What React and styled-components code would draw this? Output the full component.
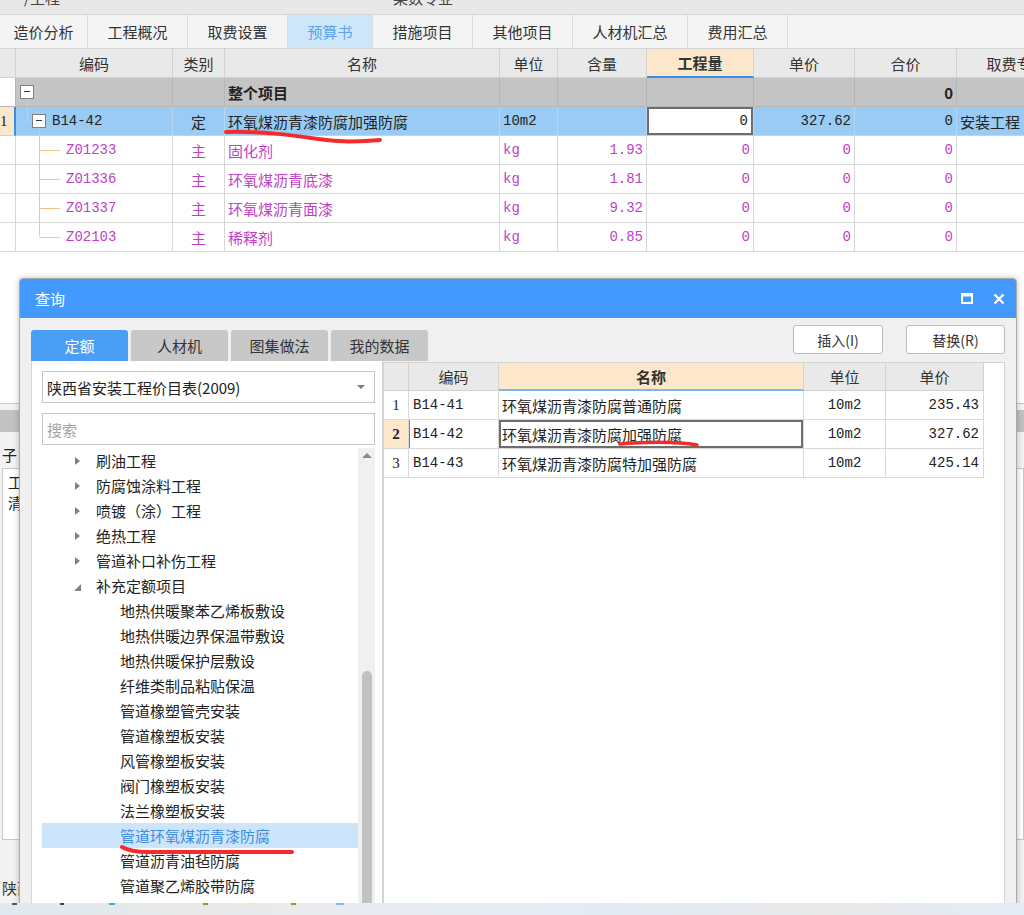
import React from 'react';
import styled, { createGlobalStyle } from 'styled-components';

const CJK = `"Noto Sans CJK SC", "Noto Sans", sans-serif`;
const MONO = `"Liberation Mono", "DejaVu Sans Mono", monospace`;
const SERIF = `"Liberation Serif", serif`;

const GlobalStyle = createGlobalStyle`
  html, body { margin: 0; padding: 0; }
  body { font-family: ${CJK}; background: #fff; overflow: hidden; }
  * { box-sizing: border-box; }
`;

const Page = styled.div`
  position: relative;
  width: 1024px;
  height: 915px;
  overflow: hidden;
  display: flex;
  flex-direction: column;
  background: #fff;
`;

/* ---------- top of the main window ---------- */
const TitleStrip = styled.div`
  height: 15px;
  flex: none;
  display: grid;
  grid-template-columns: 393px 1fr;
  background: #e8e8e8;
  border-bottom: 1px solid #d6d6d6;
  overflow: hidden;
`;
const TitleText = styled.div`
  margin-top: -12px;
  padding-left: ${p => p.$pad || 0}px;
  font-size: 15px;
  line-height: 20px;
  color: #444;
`;

const TabBar = styled.div`
  height: 34px;
  flex: none;
  display: flex;
  background: #f4f4f4;
  border-bottom: 1px solid #d4d4d4;
`;
const Tab = styled.div`
  width: ${p => p.$w}px;
  display: flex;
  align-items: center;
  justify-content: center;
  border-right: 1px solid #dadada;
  font-size: 15px;
  color: ${p => (p.$active ? '#5aa3ec' : '#333')};
  background: ${p => (p.$active ? '#cde6f8' : '#f4f4f4')};
`;

/* ---------- grid rows shared by both tables ---------- */
const Row = styled.div`
  display: grid;
  grid-template-columns: ${p => p.$cols};
  height: ${p => p.$h}px;
  flex: none;
  background: ${p => p.$bg};
  color: ${p => p.$color || '#222'};
  --line: ${p => p.$line};
`;

const Cell = styled.div`
  position: relative;
  display: flex;
  align-items: center;
  justify-content: ${p => (p.$align === 'right' ? 'flex-end' : p.$align === 'center' ? 'center' : 'flex-start')};
  padding: 0 ${p => p.$pr ?? 3}px 0 ${p => p.$pl ?? 3}px;
  border-right: 1px solid var(--line);
  border-bottom: 1px solid var(--line);
  font-family: ${p => (p.$mono ? MONO : p.$serif ? SERIF : CJK)};
  font-size: ${p => (p.$mono ? 14 : 15)}px;
  font-weight: ${p => (p.$bold ? 700 : 400)};
  white-space: nowrap;
  overflow: hidden;
  ${p => p.$bg && `background: ${p.$bg};`}
`;

const HeadCell = styled(Cell)`
  justify-content: center;
  color: #333;
  background: ${p => (p.$hl ? '#fde7cb' : '#e9e9e9')};
  ${p => p.$hl && `border-bottom: 2px solid ${p.$under || '#3b8fe2'};`}
`;

const EditCell = styled(Cell)`
  background: #fff;
  box-shadow: inset 0 0 0 2px #6c6c6c;
`;

const NumCell = styled(Cell)`
  font-family: ${SERIF};
  background: ${p => (p.$active ? '#fde7cb' : '#fff')};
  ${p => p.$active && p.$edge && 'border-right: 2px solid #3b8fe2;'}
`;

/* tree bits in the code column */
const MinusBox = styled.span`
  position: absolute;
  left: ${p => p.$x}px;
  top: 7px;
  width: 14px;
  height: 14px;
  border: 1px solid #808080;
  background: #fff;
  &::after {
    content: '';
    position: absolute;
    left: 3px;
    right: 3px;
    top: 5px;
    height: 1px;
    background: #333;
  }
`;
const VLine = styled.span`
  position: absolute;
  left: ${p => p.$x}px;
  top: ${p => p.$top}px;
  bottom: ${p => p.$bottom}px;
  border-left: 1px solid #f2c68d;
`;
const HLine = styled.span`
  position: absolute;
  left: ${p => p.$x}px;
  top: 14px;
  width: ${p => p.$w}px;
  border-top: 1px solid #f2c68d;
`;

const MAIN_COLS = '16px 157px 52px 275px 58px 89px 107px 101px 102px 120px';

const children = [
  { code: 'Z01233', name: '固化剂', qty: '1.93' },
  { code: 'Z01336', name: '环氧煤沥青底漆', qty: '1.81' },
  { code: 'Z01337', name: '环氧煤沥青面漆', qty: '9.32' },
  { code: 'Z02103', name: '稀释剂', qty: '0.85' },
];

const MainGrid = () => (
  <>
    <Row $cols={MAIN_COLS} $h={29} $bg="#e9e9e9" $line="#d2d2d2">
      <HeadCell />
      <HeadCell>编码</HeadCell>
      <HeadCell>类别</HeadCell>
      <HeadCell>名称</HeadCell>
      <HeadCell>单位</HeadCell>
      <HeadCell>含量</HeadCell>
      <HeadCell $hl $bold>工程量</HeadCell>
      <HeadCell>单价</HeadCell>
      <HeadCell>合价</HeadCell>
      <HeadCell>取费专业</HeadCell>
    </Row>

    <Row $cols={MAIN_COLS} $h={29} $bg="#c4c4c4" $line="#b6b6b6">
      <NumCell />
      <Cell>
        <MinusBox $x={4} />
        <VLine $x={11} $top={21} $bottom={0} />
      </Cell>
      <Cell />
      <Cell $bold>整个项目</Cell>
      <Cell />
      <Cell />
      <Cell />
      <Cell />
      <Cell $align="right" $bold>0</Cell>
      <Cell />
    </Row>

    <Row $cols={MAIN_COLS} $h={29} $bg="#99cbf5" $line="#b6d6f1">
      <NumCell $active $edge $pl={0}>1</NumCell>
      <Cell $mono $pl={36}>
        <VLine $x={11} $top={0} $bottom={15} />
        <HLine $x={11} $w={5} />
        <MinusBox $x={16} />
        <VLine $x={23} $top={21} $bottom={0} />
        B14-42
      </Cell>
      <Cell $align="center">定</Cell>
      <Cell>环氧煤沥青漆防腐加强防腐</Cell>
      <Cell $mono>10m2</Cell>
      <Cell />
      <EditCell $mono $align="right" $pr={5}>0</EditCell>
      <Cell $mono $align="right">327.62</Cell>
      <Cell $mono $align="right">0</Cell>
      <Cell>安装工程</Cell>
    </Row>

    {children.map((c, i) => (
      <Row key={c.code} $cols={MAIN_COLS} $h={29} $bg="#fff" $color="#bf3fc6" $line="#d6d6d6">
        <NumCell />
        <Cell $mono $pl={50}>
          <VLine $x={23} $top={0} $bottom={i === children.length - 1 ? 15 : 0} />
          <HLine $x={23} $w={21} />
          {c.code}
        </Cell>
        <Cell $align="center">主</Cell>
        <Cell>{c.name}</Cell>
        <Cell $mono>kg</Cell>
        <Cell $mono $align="right">{c.qty}</Cell>
        <Cell $mono $align="right">0</Cell>
        <Cell $mono $align="right">0</Cell>
        <Cell $mono $align="right">0</Cell>
        <Cell />
      </Row>
    ))}
  </>
);

/* ---------- lower pane of the main window (mostly behind the dialog) ---------- */
const BlankArea = styled.div`
  flex: 0 0 151px;
  background: #fff;
`;
const LowerPane = styled.div`
  flex: 1;
  display: flex;
  flex-direction: column;
  padding-top: 6px;
  background: #f3f3f3;
  border-top: 1px solid #c9c9c9;
`;
const PaneBar = styled.div`
  height: 22px;
  background: #c2c2c2;
`;
const PaneLabel = styled.div`
  margin-top: 14px;
  padding-left: 2px;
  font-size: 15px;
  line-height: 18px;
  color: #222;
`;
const PaneBox = styled.div`
  margin: 4px 0 0 2px;
  height: 372px;
  padding: 2px 5px;
  background: #fff;
  border: 1px solid #c8c8c8;
  font-size: 15px;
  line-height: 21px;
  color: #222;
`;
const PaneFooter = styled.div`
  margin-top: 38px;
  padding-left: 2px;
  font-size: 15px;
  line-height: 20px;
  color: #333;
`;

/* ---------- query dialog ---------- */
const Dialog = styled.div`
  position: absolute;
  left: 19px;
  top: 278px;
  width: 998px;
  height: 650px;
  display: flex;
  flex-direction: column;
  background: #f0f0f0;
  border: 1px solid #a9a9a9;
  border-radius: 4px 4px 0 0;
  box-shadow: 0 0 6px rgba(0, 0, 0, 0.25);
  overflow: hidden;
`;
const DialogTitle = styled.div`
  height: 39px;
  flex: none;
  display: flex;
  align-items: center;
  padding: 0 11px 0 15px;
  background: #4499ff;
  color: #fff;
  font-size: 15px;
`;
const TitleButtons = styled.div`
  margin-left: auto;
  display: flex;
  align-items: center;
  gap: 20px;
`;
const DialogBody = styled.div`
  flex: 1;
  display: flex;
  flex-direction: column;
  padding: 6px 11px 0 11px;
`;
const TopRow = styled.div`
  height: 37px;
  flex: none;
  display: flex;
  justify-content: space-between;
`;
const DTabs = styled.div`
  align-self: flex-end;
  display: flex;
  gap: 3px;
`;
const DTab = styled.div`
  width: 97px;
  height: 31px;
  display: flex;
  align-items: center;
  justify-content: center;
  border-radius: 3px 3px 0 0;
  font-size: 15px;
  color: ${p => (p.$active ? '#fff' : '#333')};
  background: ${p => (p.$active ? '#4a9ef6' : '#c8c8c8')};
`;
const Buttons = styled.div`
  align-self: flex-start;
  display: flex;
  gap: 23px;
  padding-top: 1px;
`;
const Button = styled.div`
  width: ${p => p.$w}px;
  height: 29px;
  display: flex;
  align-items: center;
  justify-content: center;
  background: #fff;
  border: 1px solid #bdbdbd;
  border-radius: 3px;
  font-size: 14px;
  color: #333;
`;

const Content = styled.div`
  flex: 1;
  display: flex;
`;
const LeftPanel = styled.div`
  width: 352px;
  flex: none;
  display: flex;
  flex-direction: column;
  padding: 10px 7px 0 10px;
  background: #fff;
  border: 1px solid #d6d6d6;
  border-top: none;
`;
const Select = styled.div`
  height: 32px;
  display: flex;
  align-items: center;
  padding: 0 9px 0 4px;
  border: 1px solid #c6c6c6;
  font-size: 15px;
  color: #222;
`;
const Caret = styled.span`
  margin-left: auto;
  border-left: 4px solid transparent;
  border-right: 4px solid transparent;
  border-top: 4px solid #7a7a7a;
`;
const Search = styled.input`
  margin-top: 10px;
  height: 32px;
  padding: 0 4px;
  border: 1px solid #c6c6c6;
  outline: none;
  font-family: ${CJK};
  font-size: 15px;
  &::placeholder { color: #a3a3a3; }
`;
const TreeWrap = styled.div`
  margin-top: 3px;
  flex: 1;
  display: flex;
`;
const TreeList = styled.div`
  flex: 1;
`;
const TreeRow = styled.div`
  height: 25px;
  display: flex;
  align-items: center;
  padding-left: ${p => (p.$level === 2 ? 78 : 32)}px;
  font-size: 15px;
  color: ${p => (p.$selected ? '#3d8de0' : '#222')};
  background: ${p => (p.$selected ? '#cce5fb' : 'transparent')};
`;
const Arrow = styled.span`
  width: 22px;
  flex: none;
  display: flex;
  &::before {
    content: '';
    ${p =>
      p.$open
        ? 'margin-top: 3px; border-bottom: 7px solid #808080; border-left: 7px solid transparent;'
        : 'margin-left: 1px; border-left: 5px solid #808080; border-top: 4px solid transparent; border-bottom: 4px solid transparent;'}
  }
`;
const Scrollbar = styled.div`
  width: 17px;
  flex: none;
  display: flex;
  flex-direction: column;
  align-items: center;
  background: #f0f0f0;
`;
const ScrollUp = styled.span`
  margin-top: 5px;
  border-left: 5px solid transparent;
  border-right: 5px solid transparent;
  border-bottom: 5px solid #8a8a8a;
`;
const ScrollThumb = styled.span`
  margin-top: 213px;
  width: 10px;
  height: 240px;
  border-radius: 5px;
  background: #c2c2c2;
`;

const RightPanel = styled.div`
  flex: 1;
  display: flex;
  flex-direction: column;
  margin: 1px 0 0 0;
  background: #fff;
  border: 1px solid #d3d3d3;
`;

const QUERY_COLS = '25px 90px 305px 82px 98px';

const results = [
  { n: '1', code: 'B14-41', name: '环氧煤沥青漆防腐普通防腐', price: '235.43' },
  { n: '2', code: 'B14-42', name: '环氧煤沥青漆防腐加强防腐', price: '327.62', active: true },
  { n: '3', code: 'B14-43', name: '环氧煤沥青漆防腐特加强防腐', price: '425.14' },
];

const tree = [
  { t: '刷油工程', l: 1 },
  { t: '防腐蚀涂料工程', l: 1 },
  { t: '喷镀（涂）工程', l: 1 },
  { t: '绝热工程', l: 1 },
  { t: '管道补口补伤工程', l: 1 },
  { t: '补充定额项目', l: 1, open: true },
  { t: '地热供暖聚苯乙烯板敷设', l: 2 },
  { t: '地热供暖边界保温带敷设', l: 2 },
  { t: '地热供暖保护层敷设', l: 2 },
  { t: '纤维类制品粘贴保温', l: 2 },
  { t: '管道橡塑管壳安装', l: 2 },
  { t: '管道橡塑板安装', l: 2 },
  { t: '风管橡塑板安装', l: 2 },
  { t: '阀门橡塑板安装', l: 2 },
  { t: '法兰橡塑板安装', l: 2 },
  { t: '管道环氧煤沥青漆防腐', l: 2, selected: true },
  { t: '管道沥青油毡防腐', l: 2 },
  { t: '管道聚乙烯胶带防腐', l: 2 },
];

const QueryDialog = () => (
  <Dialog>
    <DialogTitle>
      查询
      <TitleButtons>
        <svg width="12" height="11" viewBox="0 0 12 11">
          <rect x="1" y="1.5" width="10" height="8.5" fill="none" stroke="#fff" strokeWidth="2" />
          <rect x="0" y="0" width="12" height="3.5" fill="#fff" />
        </svg>
        <svg width="12" height="12" viewBox="0 0 12 12">
          <path d="M1.5 1.5 L10.5 10.5 M10.5 1.5 L1.5 10.5" stroke="#fff" strokeWidth="2.4" />
        </svg>
      </TitleButtons>
    </DialogTitle>
    <DialogBody>
      <TopRow>
        <DTabs>
          <DTab $active>定额</DTab>
          <DTab>人材机</DTab>
          <DTab>图集做法</DTab>
          <DTab>我的数据</DTab>
        </DTabs>
        <Buttons>
          <Button $w={90}>插入(I)</Button>
          <Button $w={99}>替换(R)</Button>
        </Buttons>
      </TopRow>
      <Content>
        <LeftPanel>
          <Select>
            陕西省安装工程价目表(2009)
            <Caret />
          </Select>
          <Search placeholder="搜索" readOnly />
          <TreeWrap>
            <TreeList>
              {tree.map(item => (
                <TreeRow key={item.t} $level={item.l} $selected={item.selected}>
                  {item.l === 1 && <Arrow $open={item.open} />}
                  {item.t}
                </TreeRow>
              ))}
            </TreeList>
            <Scrollbar>
              <ScrollUp />
              <ScrollThumb />
            </Scrollbar>
          </TreeWrap>
        </LeftPanel>
        <RightPanel>
          <Row $cols={QUERY_COLS} $h={28} $bg="#fff" $line="#d2d2d2">
            <HeadCell />
            <HeadCell>编码</HeadCell>
            <HeadCell $hl $bold $under="#7fb6ec">名称</HeadCell>
            <HeadCell>单位</HeadCell>
            <HeadCell>单价</HeadCell>
          </Row>
          {results.map(r => (
            <Row key={r.n} $cols={QUERY_COLS} $h={29} $bg="#fff" $line="#d8d8d8">
              <NumCell $align="center" $active={r.active} $bold={r.active}>{r.n}</NumCell>
              <Cell $mono $pl={4} style={r.active ? { boxShadow: 'inset 1px 0 #3b8fe2' } : undefined}>{r.code}</Cell>
              {r.active ? <EditCell>{r.name}</EditCell> : <Cell>{r.name}</Cell>}
              <Cell $mono $align="center">10m2</Cell>
              <Cell $mono $align="right" $pr={4}>{r.price}</Cell>
            </Row>
          ))}
        </RightPanel>
      </Content>
    </DialogBody>
  </Dialog>
);

/* ---------- red hand-drawn marks and the taskbar edge ---------- */
const Marks = styled.svg`
  position: absolute;
  left: 0;
  top: 0;
  pointer-events: none;
`;

const Taskbar = styled.div`
  position: absolute;
  left: 0;
  right: 0;
  bottom: 0;
  height: 12px;
  display: flex;
  align-items: flex-start;
  background: linear-gradient(90deg, #dfe9f0 0%, #e9e9e9 18%, #e7ecf3 45%, #e2ebf5 60%, #e9e9e9 80%, #e3ecf6 100%);
`;
const TrayTip = styled.span`
  width: ${p => p.$w}px;
  height: 2px;
  margin-left: ${p => p.$ml}px;
  background: ${p => p.$c};
`;

export default function App() {
  return (
    <Page>
      <GlobalStyle />
      <TitleStrip>
        <TitleText $pad={24}>/工程</TitleText>
        <TitleText>某数专业</TitleText>
      </TitleStrip>
      <TabBar>
        <Tab $w={88}>造价分析</Tab>
        <Tab $w={100}>工程概况</Tab>
        <Tab $w={100}>取费设置</Tab>
        <Tab $w={85} $active>预算书</Tab>
        <Tab $w={100}>措施项目</Tab>
        <Tab $w={100}>其他项目</Tab>
        <Tab $w={115}>人材机汇总</Tab>
        <Tab $w={100}>费用汇总</Tab>
      </TabBar>
      <MainGrid />
      <BlankArea />
      <LowerPane>
        <PaneBar />
        <PaneLabel>子目信息</PaneLabel>
        <PaneBox>
          <div>工程量表达式</div>
          <div>清单说明</div>
        </PaneBox>
        <PaneFooter>陕西省安装工程</PaneFooter>
      </LowerPane>

      <QueryDialog />

      <Marks width="1024" height="915" viewBox="0 0 1024 915">
        <g fill="none" stroke="#f32b2b" strokeLinecap="round">
          <path d="M226 132 C 262 131, 290 135, 318 139 S 362 141, 380 140" strokeWidth="4" />
          <path d="M620 444 C 640 442, 676 441, 697 445" strokeWidth="3.5" />
          <path d="M122 847 C 127 850, 133 852, 148 852 L 292 852" strokeWidth="4" />
        </g>
      </Marks>

      <Taskbar>
        <TrayTip $ml={12} $w={5} $c="#555" />
        <TrayTip $ml={43} $w={4} $c="#444" />
        <TrayTip $ml={45} $w={6} $c="#2bb5c8" />
        <TrayTip $ml={88} $w={5} $c="#9a9a20" />
        <TrayTip $ml={40} $w={6} $c="#f3e6b0" />
        <TrayTip $ml={37} $w={5} $c="#9a9a20" />
        <TrayTip $ml={40} $w={8} $c="#8ab8ee" />
      </Taskbar>
    </Page>
  );
}
